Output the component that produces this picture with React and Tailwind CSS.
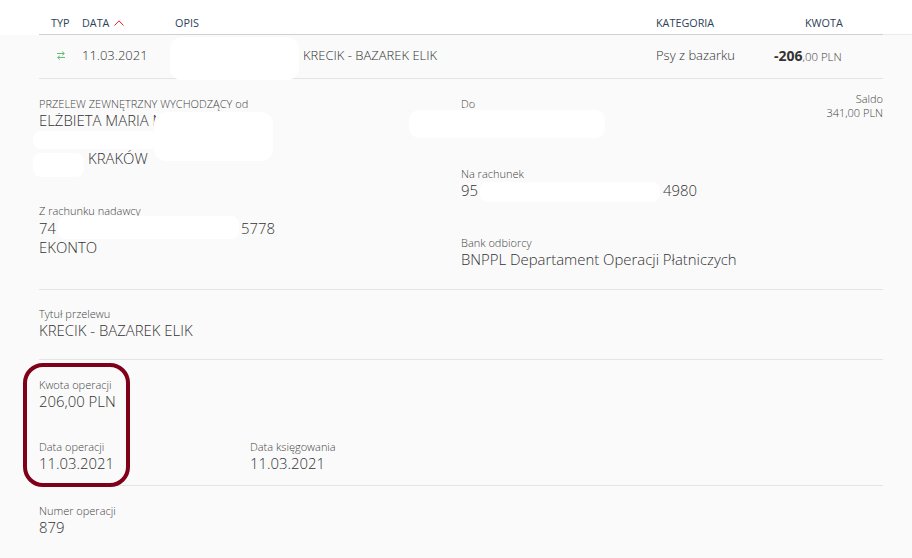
import React from 'react';

const font = "font-['Open_Sans',sans-serif]";

// Label with its value lines below
function Field({ label, lines, className = '' }) {
  return (
    <div className={className}>
      <div className="text-[11px] leading-[15px] font-light text-[#444]">{label}</div>
      {lines.map((line, i) => (
        <div key={i} className="text-[14.9px] leading-[19px] font-light text-[#333] whitespace-nowrap">{line}</div>
      ))}
    </div>
  );
}

function Blob({ className }) {
  return <div className={`absolute bg-white ${className}`}></div>;
}

export default function App() {
  return (
    <div className={`${font} relative w-[912px] h-[558px] overflow-hidden bg-[#fafafa]`}>
      {/* table header */}
      <div className="h-[35px] bg-white pl-[39px] flex">
        <div className="flex-1 border-b border-[#d0d0d0] flex items-end pb-[4px] text-[10.8px] leading-[15px] text-[#2c4258]">
          <span className="ml-[12px] w-[31px]">TYP</span>
          <span className="w-[93px] flex items-center gap-[5px]">
            DATA
            <svg width="10" height="6" viewBox="0 0 10 6" fill="none" stroke="#e02020" strokeWidth="1">
              <path d="M0.5 5.5 L5 0.8 L9.5 5.5" />
            </svg>
          </span>
          <span className="w-[481px]">OPIS</span>
          <span className="w-[149px]">KATEGORIA</span>
          <span>KWOTA</span>
        </div>
        <div className="w-[29px] border-b border-[#ececec]"></div>
      </div>

      {/* transaction row */}
      <div className="h-[44px] border-b border-[#e4e4e4] ml-[39px] mr-[29px] pb-[2px] flex items-center text-[13px] font-light text-[#333]">
        <span className="ml-[18px] w-[25px]">
          <svg width="8" height="9" viewBox="0 0 8 9" fill="none" stroke="#5fbf75" strokeWidth="1">
            <path d="M0 2.5 H7 M5.2 0.5 L7.4 2.5 L5.2 4.2 M8 6.5 H1 M2.8 4.8 L0.6 6.5 L2.8 8.5" />
          </svg>
        </span>
        <span className="w-[221px]">11.03.2021</span>
        <span className="w-[353px]">KRECIK - BAZAREK ELIK</span>
        <span className="w-[118px]">Psy z bazarku</span>
        <span className="text-[11.4px] text-[#444] whitespace-nowrap">
          <b className="text-sm font-bold text-[#333]">-206</b>,00 PLN
        </span>
      </div>

      {/* sender and receiver */}
      <div className="ml-[39px] mr-[29px] h-[211px] border-b border-[#e4e4e4] grid grid-cols-[422px_1fr_auto] pt-[17px]">
        <div>
          <Field
            label="PRZELEW ZEWNĘTRZNY WYCHODZĄCY od"
            lines={['ELŻBIETA MARIA N', '\u00a0', <span className="ml-[49px]">KRAKÓW</span>]}
          />
          <Field
            className="mt-[35px]"
            label="Z rachunku nadawcy"
            lines={[<span className="block pt-[1px]">74<span className="ml-[185px]">5778</span></span>, 'EKONTO']}
          />
        </div>
        <div>
          <Field label="Do" lines={['\u00a0']} />
          <Field
            className="mt-[36px]"
            label="Na rachunek"
            lines={[<>95<span className="ml-[185px]">4980</span></>]}
          />
          <Field className="mt-[35px]" label="Bank odbiorcy" lines={['BNPPL Departament Operacji Płatniczych']} />
        </div>
        <div className="text-right text-[11px] leading-[14px] font-light text-[#444] -mt-[4px]">
          <div>Saldo</div>
          <div>341,00 PLN</div>
        </div>
      </div>

      {/* title */}
      <div className="ml-[39px] mr-[29px] h-[70px] border-b border-[#e4e4e4] pt-[16px]">
        <Field label="Tytuł przelewu" lines={['KRECIK - BAZAREK ELIK']} />
      </div>

      {/* amounts and dates */}
      <div className="ml-[39px] mr-[29px] h-[126px] border-b border-[#e4e4e4] pt-[17px]">
        <Field label="Kwota operacji" lines={['206,00 PLN']} />
        <div className="flex mt-[28px]">
          <Field className="w-[211px]" label="Data operacji" lines={['11.03.2021']} />
          <Field label="Data księgowania" lines={['11.03.2021']} />
        </div>
      </div>

      <div className="ml-[39px] pt-[17px]">
        <Field label="Numer operacji" lines={['879']} />
      </div>

      {/* redactions */}
      <Blob className="left-[170px] top-[37px] w-[129px] h-[43px] rounded-[12px]" />
      <Blob className="left-[154px] top-[112px] w-[119px] h-[49px] rounded-[12px]" />
      <Blob className="left-[33px] top-[131px] w-[125px] h-[18px] rounded-[8px]" />
      <Blob className="left-[33px] top-[153px] w-[51px] h-[24px] rounded-[8px]" />
      <Blob className="left-[409px] top-[110px] w-[196px] h-[28px] rounded-[10px]" />
      <Blob className="left-[480px] top-[182px] w-[180px] h-[20px] rounded-[8px]" />
      <Blob className="left-[58px] top-[216px] w-[181px] h-[23px] rounded-[8px]" />

      {/* highlight frame */}
      <div className="absolute left-[23px] top-[363px] w-[107px] h-[124px] border-[4px] border-[#7f0019] rounded-[20px]"></div>
    </div>
  );
}
